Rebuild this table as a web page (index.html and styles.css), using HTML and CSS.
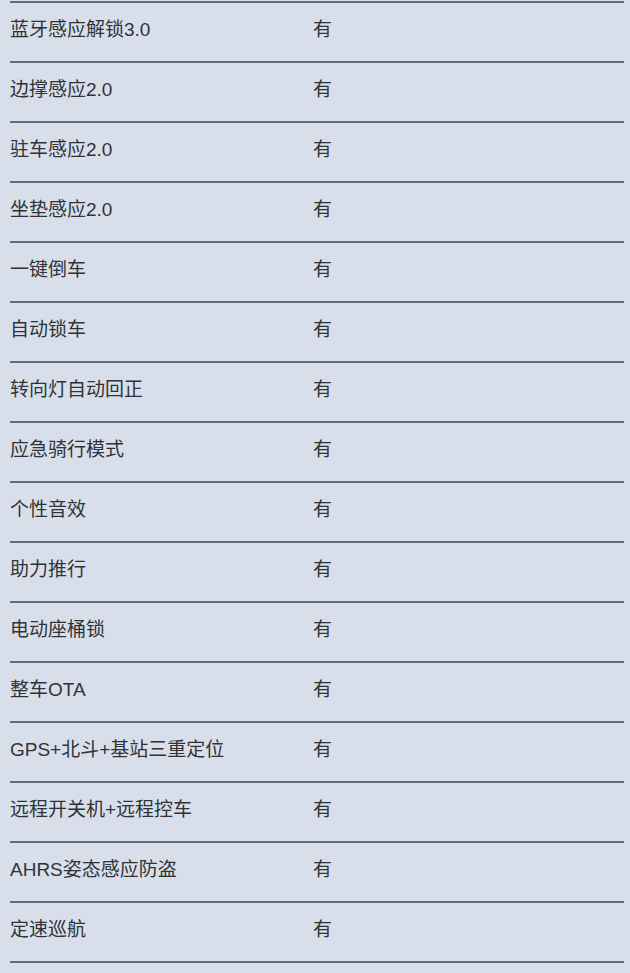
FILE: index.html
```html
<!DOCTYPE html>
<html lang="zh">
<head>
<meta charset="utf-8">
<link rel="stylesheet" href="styles.css">
</head>
<body>
<div class="spec">
  <div class="row"><span class="name">蓝牙感应解锁3.0</span><span class="val">有</span></div>
  <div class="row"><span class="name">边撑感应2.0</span><span class="val">有</span></div>
  <div class="row"><span class="name">驻车感应2.0</span><span class="val">有</span></div>
  <div class="row"><span class="name">坐垫感应2.0</span><span class="val">有</span></div>
  <div class="row"><span class="name">一键倒车</span><span class="val">有</span></div>
  <div class="row"><span class="name">自动锁车</span><span class="val">有</span></div>
  <div class="row"><span class="name">转向灯自动回正</span><span class="val">有</span></div>
  <div class="row"><span class="name">应急骑行模式</span><span class="val">有</span></div>
  <div class="row"><span class="name">个性音效</span><span class="val">有</span></div>
  <div class="row"><span class="name">助力推行</span><span class="val">有</span></div>
  <div class="row"><span class="name">电动座桶锁</span><span class="val">有</span></div>
  <div class="row"><span class="name">整车OTA</span><span class="val">有</span></div>
  <div class="row"><span class="name">GPS+北斗+基站三重定位</span><span class="val">有</span></div>
  <div class="row"><span class="name">远程开关机+远程控车</span><span class="val">有</span></div>
  <div class="row"><span class="name">AHRS姿态感应防盗</span><span class="val">有</span></div>
  <div class="row"><span class="name">定速巡航</span><span class="val">有</span></div>
  <div class="row end"></div>
</div>
</body>
</html>
```
FILE: styles.css
```css
html, body {
  margin: 0;
  padding: 0;
  background: #d9dfea;
}
body {
  font-family: "Liberation Sans", "Noto Sans CJK SC", sans-serif;
  color: #2f3338;
  height: 973px;
  overflow: hidden;
}
.spec {
  padding: 1px 6px 0 10px;
}
.row {
  display: flex;
  align-items: center;
  height: 58px;
  padding-bottom: 5px;
  box-sizing: border-box;
  height: 60px;
  border-top: 2px solid #646c77;
  font-size: 19px;
  line-height: 24px;
}
.name {
  width: 303px;
  flex: none;
}
.val {
  flex: none;
}
.row.end {
  height: 10px;
}
```
